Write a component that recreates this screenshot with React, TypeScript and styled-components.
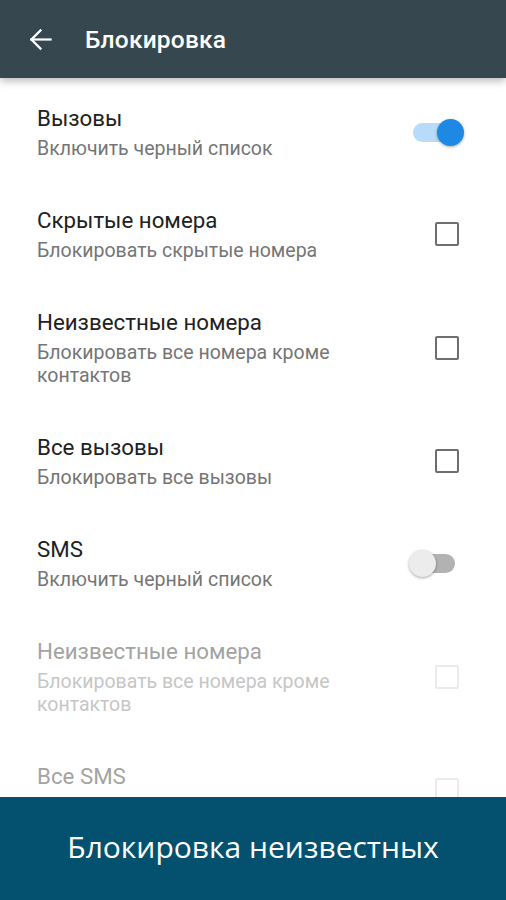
import styled, { createGlobalStyle, css } from "styled-components"

const GlobalStyle = createGlobalStyle`
  html, body {
    margin: 0;
    padding: 0;
    background: #ffffff;
  }
  body {
    font-family: Roboto, "Noto Sans", sans-serif;
  }
`

const Screen = styled.div`
  width: 506px;
  height: 900px;
  display: flex;
  flex-direction: column;
  overflow: hidden;
  background: #ffffff;
`

const Toolbar = styled.header`
  height: 78px;
  flex-shrink: 0;
  display: flex;
  align-items: center;
  background: #37474f;
  box-shadow: 0 3px 8px rgba(0, 0, 0, 0.28);
  position: relative;
  z-index: 1;
`

const BackButton = styled.button`
  width: 24px;
  height: 24px;
  margin-left: 28px;
  padding: 0;
  border: none;
  background: transparent;
  display: flex;
  align-items: center;
  justify-content: center;
`

const ToolbarTitle = styled.h1`
  margin: 0 0 0 33px;
  font-size: 24.5px;
  font-weight: 500;
  color: #ffffff;
  letter-spacing: 0.2px;
`

const List = styled.div`
  flex: 1;
  overflow: hidden;
`

const Row = styled.div`
  display: flex;
  align-items: center;
  padding: 26px 47px 20px 37px;
`

const Texts = styled.div`
  flex: 1;
  min-width: 0;
`

const Title = styled.div<{ $disabled?: boolean }>`
  font-size: 22.3px;
  line-height: 28px;
  color: ${(p) => (p.$disabled ? "#a3a3a3" : "#212121")};
`

const Summary = styled.div<{ $disabled?: boolean }>`
  margin-top: 5px;
  font-size: 19.5px;
  line-height: 23px;
  color: ${(p) => (p.$disabled ? "#c6c6c6" : "#757575")};
  max-width: 310px;
`

const Control = styled.div`
  flex-shrink: 0;
  display: flex;
  align-items: center;
  justify-content: flex-end;
`

const Checkbox = styled.span<{ $disabled?: boolean }>`
  width: 24px;
  height: 24px;
  box-sizing: border-box;
  border-radius: 2px;
  border: 2.5px solid ${(p) => (p.$disabled ? "#ebebeb" : "#6e6e6e")};
`

const Track = styled.span<{ $on?: boolean }>`
  position: relative;
  display: block;
  width: 42px;
  height: 19px;
  border-radius: 10px;
  margin-right: 4px;
  background: ${(p) => (p.$on ? "#b7dbf8" : "#b2b2b2")};
`

const Thumb = styled.span<{ $on?: boolean }>`
  position: absolute;
  top: -4px;
  width: 27px;
  height: 27px;
  border-radius: 50%;
  box-shadow: 0 1px 3px rgba(0, 0, 0, 0.35);
  ${(p) =>
    p.$on
      ? css`
          right: -9px;
          background: #1e88e5;
        `
      : css`
          left: -4px;
          background: #ececec;
        `}
`

const Banner = styled.footer`
  height: 103px;
  flex-shrink: 0;
  display: flex;
  align-items: center;
  justify-content: center;
  background: #03516f;
  color: #ffffff;
  font-family: "Open Sans", "Noto Sans", sans-serif;
  font-size: 30px;
  padding-bottom: 4px;
  box-sizing: border-box;
  position: relative;
  z-index: 1;
`

type Item = {
  title: string
  summary: string
  kind: "switch" | "check"
  on?: boolean
  disabled?: boolean
}

const items: Item[] = [
  { title: "Вызовы", summary: "Включить черный список", kind: "switch", on: true },
  { title: "Скрытые номера", summary: "Блокировать скрытые номера", kind: "check" },
  { title: "Неизвестные номера", summary: "Блокировать все номера кроме контактов", kind: "check" },
  { title: "Все вызовы", summary: "Блокировать все вызовы", kind: "check" },
  { title: "SMS", summary: "Включить черный список", kind: "switch" },
  { title: "Неизвестные номера", summary: "Блокировать все номера кроме контактов", kind: "check", disabled: true },
  { title: "Все SMS", summary: "Блокировать все SMS", kind: "check", disabled: true },
]

function ArrowBack() {
  return (
    <svg width="23" height="23" viewBox="0 0 24 24" fill="none" stroke="#ffffff" strokeWidth="2.3" strokeLinecap="square">
      <path d="M2.5 12H22.5" />
      <path d="M12 2.5L2.5 12L12 21.5" strokeLinejoin="miter" />
    </svg>
  )
}

export default function App() {
  return (
    <>
      <GlobalStyle />
      <Screen>
        <Toolbar>
          <BackButton aria-label="Назад">
            <ArrowBack />
          </BackButton>
          <ToolbarTitle>Блокировка</ToolbarTitle>
        </Toolbar>

        <List>
          {items.map((item, i) => (
            <Row key={i}>
              <Texts>
                <Title $disabled={item.disabled}>{item.title}</Title>
                <Summary $disabled={item.disabled}>{item.summary}</Summary>
              </Texts>
              <Control>
                {item.kind === "switch" ? (
                  <Track $on={item.on}>
                    <Thumb $on={item.on} />
                  </Track>
                ) : (
                  <Checkbox $disabled={item.disabled} />
                )}
              </Control>
            </Row>
          ))}
        </List>

        <Banner>Блокировка неизвестных</Banner>
      </Screen>
    </>
  )
}
